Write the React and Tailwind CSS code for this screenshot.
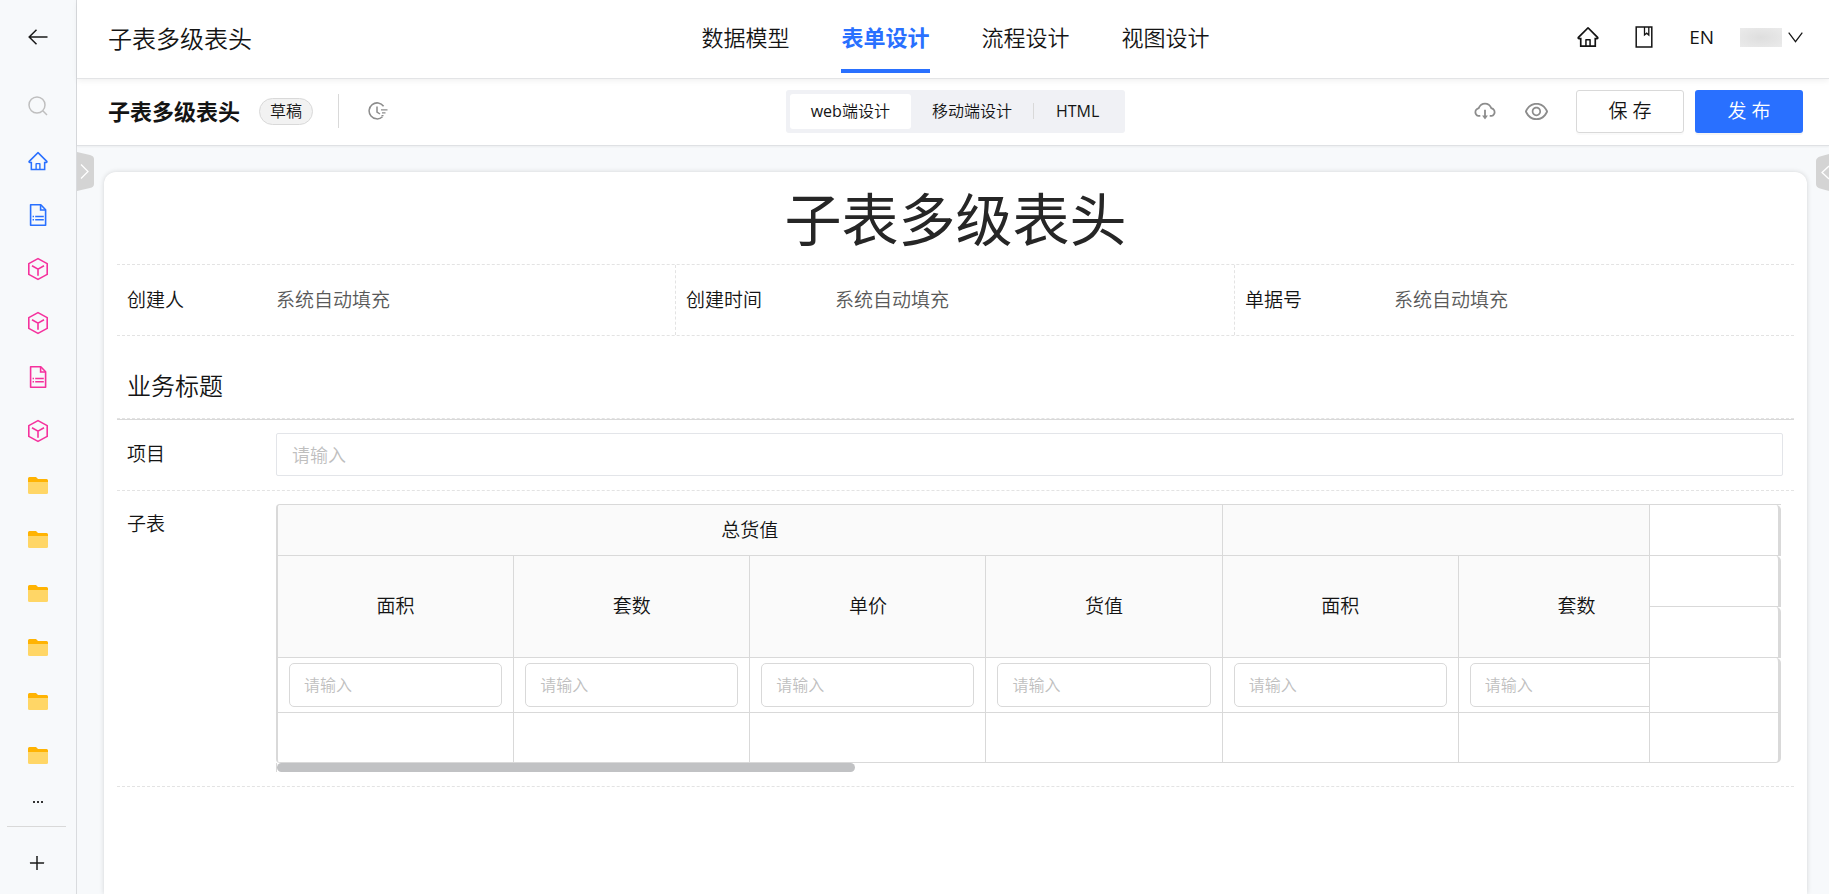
import React from "react";
import {
  AiOutlineCloudDownload,
  AiOutlineEye,
  AiOutlineHome,
  AiOutlinePlus,
} from "react-icons/ai";

const SIDE_ITEMS = [
  { type: "home", color: "text-[#2970ff]", label: "首页" },
  { type: "doc", color: "text-[#2970ff]", label: "表单" },
  { type: "cube", color: "text-[#f5319d]", label: "模型" },
  { type: "cube", color: "text-[#f5319d]", label: "模型" },
  { type: "doc", color: "text-[#f5319d]", label: "表单" },
  { type: "cube", color: "text-[#f5319d]", label: "模型" },
  { type: "folder", label: "文件夹" },
  { type: "folder", label: "文件夹" },
  { type: "folder", label: "文件夹" },
  { type: "folder", label: "文件夹" },
  { type: "folder", label: "文件夹" },
  { type: "folder", label: "文件夹" },
];

const NAV = ["数据模型", "表单设计", "流程设计", "视图设计"];

const SYSTEM_FIELDS = ["创建人", "创建时间", "单据号"];

const COLUMNS = ["面积", "套数", "单价", "货值", "面积", "套数"];

function BackIcon() {
  return (
    <svg width="20" height="16" viewBox="0 0 20 16" fill="none" stroke="currentColor" strokeWidth="1.5">
      <path d="M8.5.8L1.2 8l7.3 7.2M1.2 8H19.5" />
    </svg>
  );
}

function SearchIcon() {
  return (
    <svg width="20" height="20" viewBox="0 0 20 20" fill="none" stroke="currentColor" strokeWidth="1.5">
      <circle cx="9" cy="9" r="8" />
      <path d="M14.8 14.8l4.2 4.2" />
    </svg>
  );
}

function DocIcon() {
  return (
    <svg width="18" height="24" viewBox="0 0 18 24" fill="none" stroke="currentColor" strokeWidth="1.6">
      <path d="M1.6 1.8h10.2l4.8 5v15.4H1.6z" strokeLinejoin="round" />
      <path d="M11.6 2v5h5" />
      <path d="M3.6 13.5h1.4M6.2 13.5h8.6M3.6 16.7h1.4M6.2 16.7h8.6" strokeWidth="1.5" />
    </svg>
  );
}

function CubeIcon() {
  return (
    <svg width="22" height="24" viewBox="0 0 22 24" fill="none" stroke="currentColor" strokeWidth="1.6">
      <path d="M11 1.6l9.2 5v10.8l-9.2 5-9.2-5V6.6z" strokeLinejoin="round" />
      <path d="M5 8.8l6 3.4 6-3.4M11 12.2v6.6" />
    </svg>
  );
}

function FolderIcon() {
  return (
    <svg width="20" height="17" viewBox="0 0 20 17">
      <path d="M0 1.5Q0 0 1.5 0H8l2 2h8.5Q20 2 20 3.5V9H0z" fill="#ffb302" />
      <path d="M0 5h20v10.5q0 1.5-1.5 1.5h-17Q0 17 0 15.5z" fill="#ffd666" />
    </svg>
  );
}

function BookmarkIcon() {
  return (
    <svg width="18" height="22" viewBox="0 0 18 22" fill="none" stroke="currentColor" strokeWidth="1.5">
      <path d="M1.2 1h15.6v20H1.2z" />
      <path d="M9.5 1v8l2.2-1.8L13.8 9V1" strokeWidth="1.3" />
    </svg>
  );
}

function HistoryIcon() {
  return (
    <svg width="20" height="18" viewBox="0 0 20 18" fill="none" stroke="currentColor" strokeWidth="1.5">
      <path d="M15.6 4.2A8 8 0 1 0 14.5 14.8" />
      <path d="M9 4.5V10l3 2" />
      <path d="M13 7.8h6.5M14 10.8h3.5M13.5 13.6h2" strokeWidth="1.3" />
    </svg>
  );
}

function SideIcon({ type }) {
  if (type === "home") return <AiOutlineHome size={22} />;
  if (type === "doc") return <DocIcon />;
  if (type === "cube") return <CubeIcon />;
  return <FolderIcon />;
}

function Sidebar() {
  return (
    <aside className="flex w-[77px] shrink-0 flex-col border-r border-[#d9dbde] bg-[#f7f9fb]">
      <button aria-label="返回" className="flex h-[74px] shrink-0 items-center justify-center text-[#1a1a1a]">
        <BackIcon />
      </button>
      <button aria-label="搜索" className="flex h-[60px] shrink-0 items-center justify-center pt-1 text-[#bfbfbf]">
        <SearchIcon />
      </button>
      {SIDE_ITEMS.map((item, i) => (
        <button
          key={i}
          aria-label={item.label}
          className={`flex h-[54px] shrink-0 items-center justify-center ${item.color || ""}`}
        >
          <SideIcon type={item.type} />
        </button>
      ))}
      <button aria-label="更多" className="flex h-[44px] shrink-0 items-center justify-center gap-[2px] pb-1">
        <span className="size-[2px] bg-[#333]" />
        <span className="size-[2px] bg-[#333]" />
        <span className="size-[2px] bg-[#333]" />
      </button>
      <div className="mr-[10px] ml-[7px] border-t border-[#d9d9d9]" />
      <button aria-label="新建" className="flex h-[72px] shrink-0 items-center justify-center pr-[2px] text-[#1a1a1a]">
        <AiOutlinePlus size={20} />
      </button>
    </aside>
  );
}

function Header() {
  return (
    <header className="relative z-10 grid h-[79px] shrink-0 grid-cols-[1fr_auto_1fr] items-center border-b border-[#e3e4e6] bg-white pr-[26px] pl-[31px] shadow-[0_2px_6px_rgba(0,0,0,0.06)]">
      <h1 className="text-2xl">子表多级表头</h1>
      <nav className="flex gap-[52px] self-stretch text-[22px]">
        {NAV.map((name) => {
          const active = name === "表单设计";
          return (
            <a
              key={name}
              href="#"
              className={`mb-[5px] flex items-center border-b-4 pt-[5px] ${
                active ? "border-[#2970ff] font-bold text-[#2970ff]" : "border-transparent"
              }`}
            >
              {name}
            </a>
          );
        })}
      </nav>
      <div className="flex items-center justify-end pb-1">
        <button aria-label="主页">
          <AiOutlineHome size={24} />
        </button>
        <button aria-label="文档" className="ml-[35px]">
          <BookmarkIcon />
        </button>
        <button className="ml-9 text-[19px] font-normal">EN</button>
        <button aria-label="用户" className="ml-[26px] flex items-center gap-[6px]">
          <span className="h-[19px] w-[42px] bg-radial from-[#dedede] to-[#ebebeb]" />
          <svg width="15" height="11" viewBox="0 0 15 11" fill="none" stroke="currentColor" strokeWidth="1.2">
            <path d="M.7.7l6.8 9 6.8-9" />
          </svg>
        </button>
      </div>
    </header>
  );
}

function Toolbar() {
  return (
    <div className="grid h-[67px] shrink-0 grid-cols-[1fr_auto_1fr] items-center border-b border-[#dfe1e4] bg-white pr-[26px] pb-[2px] pl-[31px] shadow-[0_1px_2px_rgba(0,0,0,0.05)]">
      <div className="flex items-center">
        <h2 className="text-[22px] font-bold">子表多级表头</h2>
        <span className="ml-[19px] flex h-[27px] items-center rounded-full border border-[#d9d9d9] bg-[#f2f2f2] px-[10px] text-base">
          草稿
        </span>
        <span className="ml-[25px] h-[34px] border-l border-[#d9d9d9]" />
        <button aria-label="历史" className="ml-[29px] text-[#8c8c8c]">
          <HistoryIcon />
        </button>
      </div>
      <div className="flex h-[43px] items-center rounded-[3px] bg-[#f0f1f5] p-1 text-base">
        <button className="h-full rounded-[3px] bg-white px-[21px]">
          <span className="font-normal">web</span>端设计
        </button>
        <button className="h-full px-[21px]">移动端设计</button>
        <span className="h-4 border-l border-[#d9d9d9]" />
        <button className="h-full px-[22px] font-normal">HTML</button>
      </div>
      <div className="flex items-center justify-end">
        <button aria-label="下载" className="text-[#8c8c8c]">
          <AiOutlineCloudDownload size={24} />
        </button>
        <button aria-label="预览" className="ml-[26px] text-[#8c8c8c]">
          <AiOutlineEye size={27} />
        </button>
        <button className="ml-[26px] h-[43px] w-[108px] rounded-[3px] border border-[#d9d9d9] text-[19px] shadow-[0_2px_0_rgba(0,0,0,0.02)]">
          保 存
        </button>
        <button className="ml-[11px] h-[43px] w-[108px] rounded-[3px] bg-[#2970ff] text-[19px] text-white shadow-[0_2px_0_rgba(0,0,0,0.04)]">
          发 布
        </button>
      </div>
    </div>
  );
}

function SubTable() {
  return (
    <div>
      <div className="flex">
        <div className="min-w-0 flex-1 overflow-hidden rounded-l-[4px] border-t border-l-2 border-[#d9d9d9]">
          <table className="w-[1417px] table-fixed border-separate border-spacing-0">
            <thead className="bg-[#fafafa]">
              <tr className="h-[51px]">
                <th colSpan={4} className="border-r border-b border-[#d9d9d9] font-[350]">
                  总货值
                </th>
                <th colSpan={2} className="border-r border-b border-[#d9d9d9]" />
              </tr>
              <tr className="h-[102px]">
                {COLUMNS.map((name, i) => (
                  <th key={i} className="border-r border-b border-[#d9d9d9] font-[350]">
                    {name}
                  </th>
                ))}
              </tr>
            </thead>
            <tbody>
              <tr className="h-[55px]">
                {COLUMNS.map((name, i) => (
                  <td key={i} className="border-r border-b border-[#d9d9d9] px-[11px]">
                    <input
                      aria-label={name}
                      placeholder="请输入"
                      className="block h-11 w-full rounded-[5px] border border-[#d9d9d9] px-[14px] text-base placeholder:text-[#bfbfbf]"
                    />
                  </td>
                ))}
              </tr>
              <tr className="h-[50px]">
                {COLUMNS.map((name, i) => (
                  <td key={i} className="border-r border-b border-[#d9d9d9]" />
                ))}
              </tr>
            </tbody>
          </table>
        </div>
        {/* fixed action column */}
        <div className="w-[132px] shrink-0 border-t border-l border-[#d9d9d9]">
          <div className="h-[51px] rounded-tr-[5px] border-r-3 border-b border-[#d9d9d9]" />
          <div className="h-[51px] rounded-tr-[5px] border-r-3 border-b border-[#d9d9d9]" />
          <div className="h-[51px] rounded-tr-[5px] border-r-3 border-b border-[#d9d9d9]" />
          <div className="h-[55px] rounded-tr-[5px] border-r-3 border-b border-[#d9d9d9]" />
          <div className="h-[50px] rounded-br-[5px] border-r-3 border-b border-[#d9d9d9]" />
        </div>
      </div>
      <div className="border-l border-[#d9d9d9]">
        <div className="h-[9px] w-[578px] rounded-full bg-[#c1c2c4]" />
      </div>
    </div>
  );
}

function FormCard() {
  return (
    <section className="flex-1 rounded-t-xl bg-white px-[13px] text-[19px] shadow-[0_0_5px_rgba(0,0,0,0.15)]">
      <div className="flex h-[92px] items-center justify-center pt-[3px] text-[57px] leading-none font-normal text-[#262626]">
        子表多级表头
      </div>
      <div className="grid grid-cols-3 border-y border-dashed border-[#e3e3e3]">
        {SYSTEM_FIELDS.map((label) => (
          <div key={label} className="flex h-[70px] items-center border-r border-dashed border-[#e3e3e3] pl-[10px] last:border-r-0">
            <span className="w-[149px]">{label}</span>
            <span className="text-[#595959]">系统自动填充</span>
          </div>
        ))}
      </div>
      <div className="flex h-[83px] items-center border-b border-dashed border-[#e3e3e3] pt-[18px] pl-[10px] text-2xl">
        业务标题
      </div>
      <div className="flex items-center border-t border-b border-t-[#d9d9d9] border-b-[#e3e3e3] pt-[13px] pr-[11px] pb-[14px] pl-[10px] [border-bottom-style:dashed]">
        <label htmlFor="project" className="w-[149px]">
          项目
        </label>
        <input
          id="project"
          placeholder="请输入"
          className="h-[43px] flex-1 rounded-[2px] border border-[#e3e5e9] px-[15px] text-lg placeholder:text-[#bfbfbf]"
        />
      </div>
      <div className="flex items-start border-b border-dashed border-[#e3e3e3] pt-[13px] pr-[13px] pb-[14px] pl-[10px]">
        <span className="w-[149px] shrink-0 py-[6px]">子表</span>
        <div className="min-w-0 flex-1">
          <SubTable />
        </div>
      </div>
    </section>
  );
}

export default function App() {
  return (
    <div className="flex h-screen overflow-hidden bg-[#f7f9fb] font-['Open_Sans','Noto_Sans_CJK_SC',sans-serif] font-[350] text-[#141414]">
      <Sidebar />
      <div className="flex min-w-0 flex-1 flex-col">
        <Header />
        <Toolbar />
        <main className="relative flex flex-1 flex-col pt-[26px] pr-[22px] pl-[27px]">
          <button aria-label="展开左侧" className="absolute top-[6px] left-0">
            <svg width="17" height="39" viewBox="0 0 17 39">
              <path d="M0 0l13 3q4 1 4 4v25q0 3-4 4L0 39z" fill="#d4d4d4" />
              <path d="M4 12.5l7 7-7 7" fill="none" stroke="#fff" strokeWidth="1.3" />
            </svg>
          </button>
          <button aria-label="展开右侧" className="absolute top-2 right-0">
            <svg width="13" height="37" viewBox="0 0 13 37">
              <path d="M13 0L4 2.5Q0 4 0 7v23q0 3 4 4.5l9 2.5z" fill="#d4d4d4" />
              <path d="M13 12l-7 6.5 7 6.5" fill="none" stroke="#fff" strokeWidth="1.3" />
            </svg>
          </button>
          <FormCard />
        </main>
      </div>
    </div>
  );
}
